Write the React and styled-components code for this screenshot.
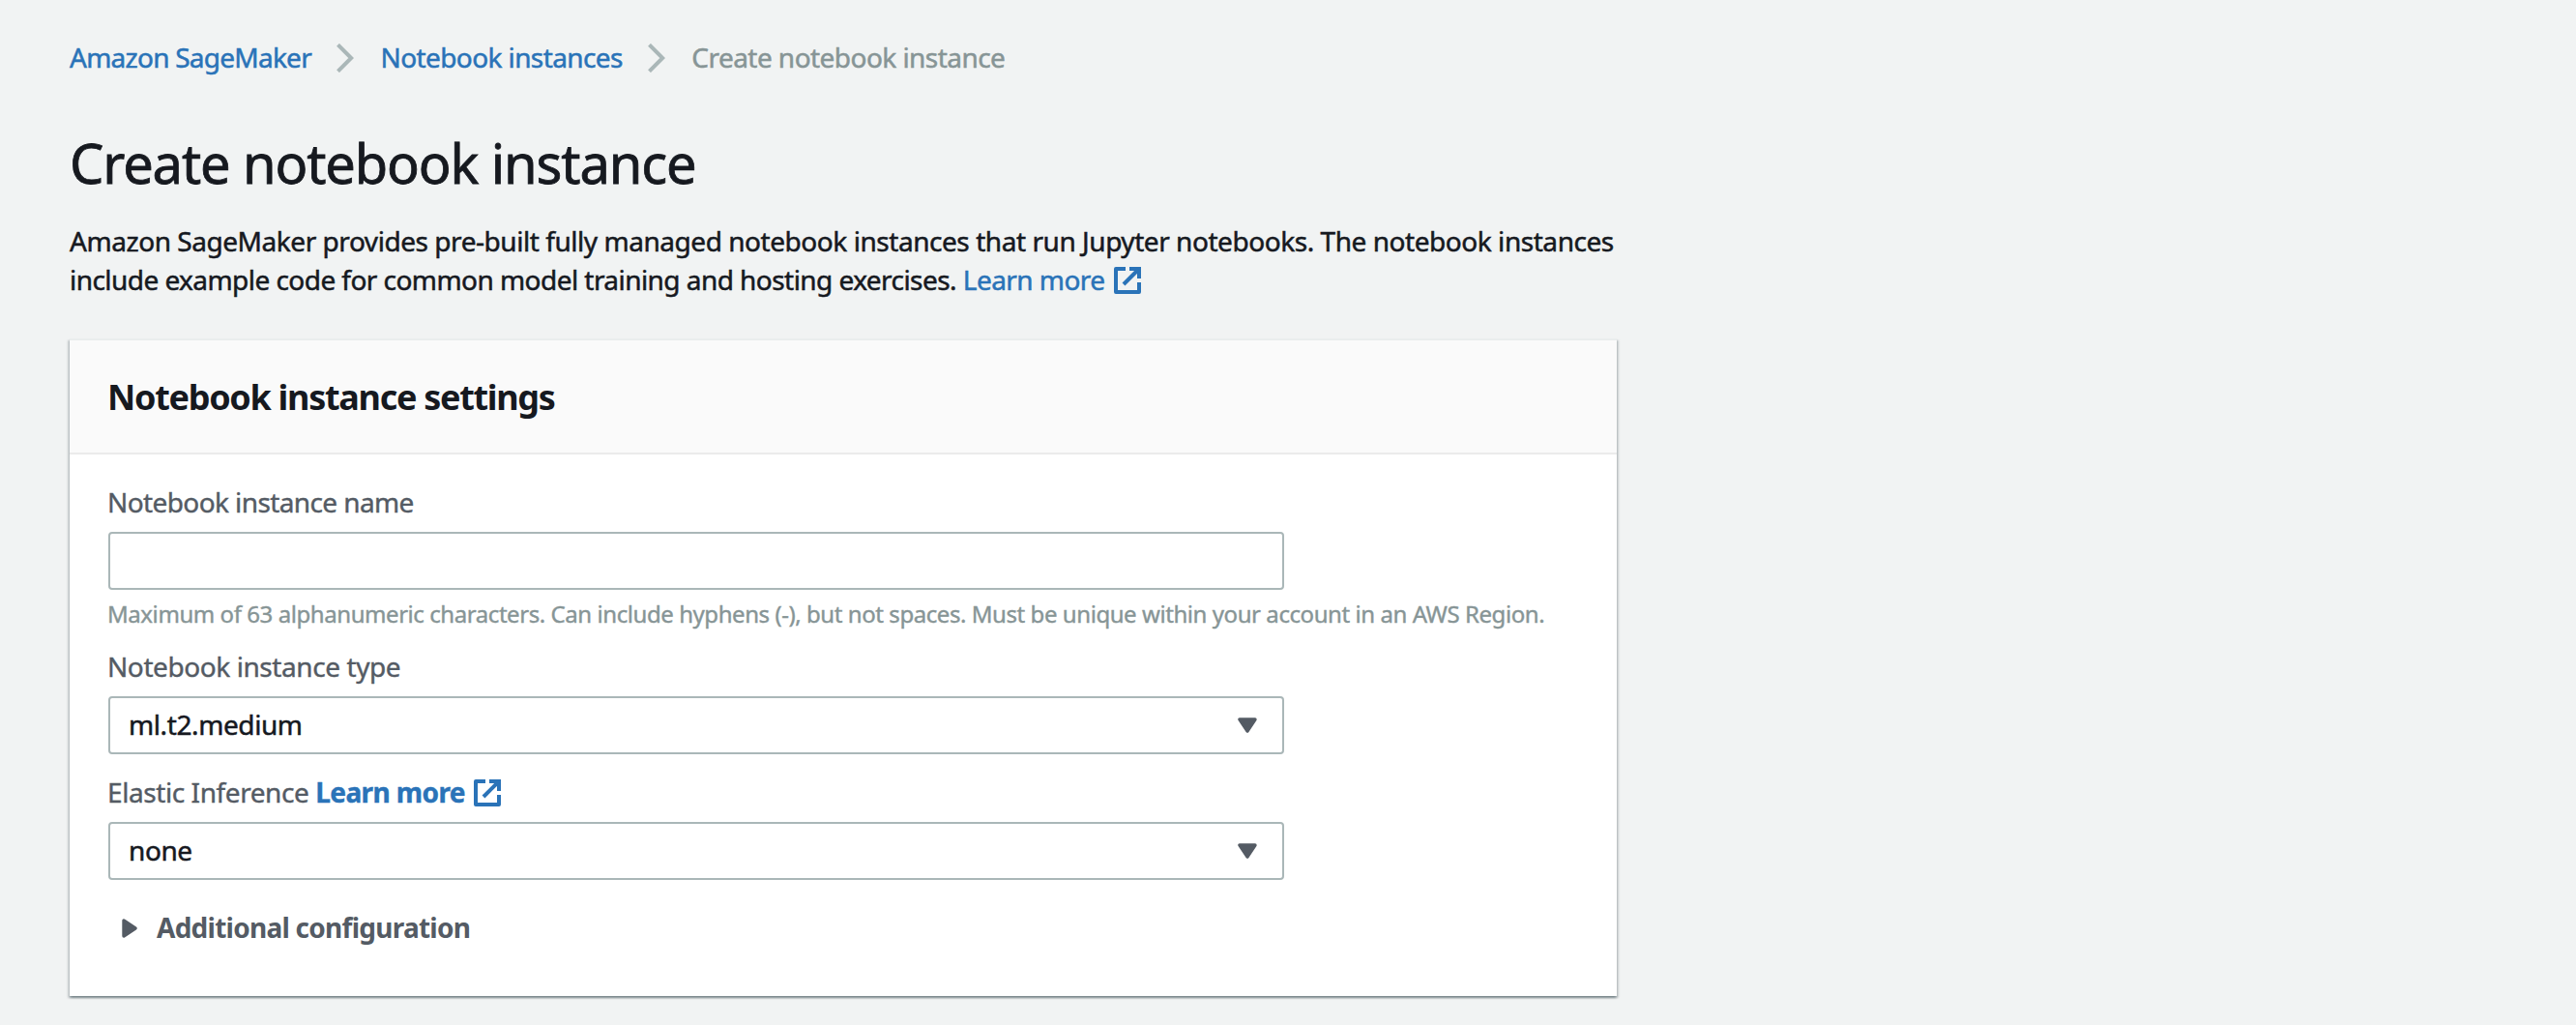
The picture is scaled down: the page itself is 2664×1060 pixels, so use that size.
import React from "react";
import styled, { createGlobalStyle } from "styled-components";

const GlobalStyle = createGlobalStyle`
  * { box-sizing: border-box; }
  body {
    margin: 0;
    background: #f1f3f3;
    color: #16191f;
    font-family: "Noto Sans", "Open Sans", sans-serif;
    font-size: 28px;
    line-height: 40px;
  }
`;

const Page = styled.main`
  width: 1672px;
  min-height: 1060px;
  padding: 39px 0 30px 72px;
`;

const Breadcrumbs = styled.nav`
  display: flex;
  align-items: center;
  gap: 26px;
  height: 40px;
  -webkit-text-stroke: 0.5px;
`;

const Link = styled.a`
  color: #2a73b8;
  font-weight: ${(p) => (p.$bold ? 700 : 400)};
  letter-spacing: ${(p) => p.$track || "-0.55px"};
  text-decoration: none;
  white-space: nowrap;
`;

const Crumb = styled(Link)`
  margin-left: ${(p) => p.$inset || 0}px;
`;

const Current = styled.span`
  margin-left: 1.5px;
  color: #879596;
  letter-spacing: -0.55px;
  white-space: nowrap;
`;

const ChevronSvg = styled.svg`
  flex: none;
  width: 18px;
  height: 30px;
  margin-top: 2px;
`;

const Title = styled.h1`
  margin: 55px 0 27px;
  font-size: 56px;
  font-weight: 400;
  line-height: 68px;
  letter-spacing: -1.12px;
  -webkit-text-stroke: 0.8px;
`;

const Intro = styled.p`
  margin: 0 0 41px;
  -webkit-text-stroke: 0.5px;
`;

const IntroLine = styled.span`
  display: block;
  white-space: nowrap;
  letter-spacing: ${(p) => p.$track};
`;

const ExternalSvg = styled.svg`
  width: 28px;
  height: 28px;
  margin-left: 9px;
  vertical-align: -4px;
`;

const Card = styled.section`
  width: 1600px;
  background: #fff;
  border-top: 2px solid #eaeded;
  box-shadow: 0 2px 2px 0 rgba(0, 28, 36, 0.3),
    2px 2px 2px 0 rgba(0, 28, 36, 0.15),
    -2px 2px 2px 0 rgba(0, 28, 36, 0.15);
`;

const CardHeader = styled.header`
  height: 118px;
  padding: 37px 39px 0;
  background: #fafafa;
  border-bottom: 2px solid #ebebeb;
`;

const CardTitle = styled.h2`
  margin: 0;
  font-size: 36px;
  font-weight: 700;
  line-height: 44px;
  letter-spacing: -1.3px;
`;

const CardBody = styled.div`
  display: flex;
  flex-direction: column;
  padding: 29px 40px 51px;
`;

const Field = styled.div`
  display: flex;
  flex-direction: column;
  margin-bottom: ${(p) => p.$after}px;
`;

const Label = styled.label`
  height: 40px;
  margin: 0 0 11px -1px;
  color: #545b64;
  letter-spacing: ${(p) => p.$track};
  white-space: nowrap;
  -webkit-text-stroke: 0.4px;
`;

const TextInput = styled.input`
  width: 1216px;
  height: 60px;
  padding: 0 19px;
  background: #fff;
  border: 2px solid #aab7b8;
  border-radius: 4px;
  font: inherit;
  outline: none;
`;

const SelectBox = styled.div`
  display: flex;
  align-items: center;
  justify-content: space-between;
  width: 1216px;
  height: 60px;
  padding: 0 26px 2px 19px;
  background: #fff;
  border: 2px solid #aab7b8;
  border-radius: 4px;
  letter-spacing: -0.4px;
  -webkit-text-stroke: 0.5px;
`;

const DownSvg = styled.svg`
  width: 20px;
  height: 16px;
  margin-top: 2px;
`;

const Hint = styled.p`
  margin: 9px 0 0 -1px;
  color: #879596;
  font-size: 24px;
  line-height: 32px;
  letter-spacing: -0.435px;
  white-space: nowrap;
  -webkit-text-stroke: 0.4px;
`;

const Expander = styled.div`
  display: flex;
  align-items: center;
  gap: 20px;
  height: 40px;
  padding-left: 14px;
  color: #545b64;
  font-weight: 700;
  letter-spacing: -0.74px;
`;

const RightSvg = styled.svg`
  width: 16px;
  height: 20px;
  margin-top: 2px;
`;

const Chevron = () => (
  <ChevronSvg viewBox="0 0 18 30" fill="none">
    <path d="M1.5 1.3 15.2 15 1.5 28.7" stroke="#aab7b8" strokeWidth="4" />
  </ChevronSvg>
);

const ExternalIcon = () => (
  <ExternalSvg viewBox="0 0 28 28" fill="none" stroke="#2a73b8" strokeWidth="4" strokeLinejoin="round">
    <path d="M12 2H2V26H26V16" />
    <path d="M16 2H26V12" strokeLinejoin="miter" />
    <path d="M10 18 25.5 2.5" />
  </ExternalSvg>
);

const Select = ({ children }) => (
  <SelectBox role="combobox">
    {children}
    <DownSvg viewBox="0 0 20 16">
      <path d="M2 2H18L10 14Z" fill="#545b64" stroke="#545b64" strokeWidth="3.4" strokeLinejoin="round" />
    </DownSvg>
  </SelectBox>
);

export default function App() {
  return (
    <>
      <GlobalStyle />
      <Page>
        <Breadcrumbs>
          <Crumb $track="-0.75px">Amazon SageMaker</Crumb>
          <Chevron />
          <Crumb $inset={1.5} $track="-0.6px">Notebook instances</Crumb>
          <Chevron />
          <Current>Create notebook instance</Current>
        </Breadcrumbs>
        <Title>Create notebook instance</Title>
        <Intro>
          <IntroLine $track="-0.45px">
            Amazon SageMaker provides pre-built fully managed notebook instances that run Jupyter notebooks. The notebook instances
          </IntroLine>
          <IntroLine $track="-0.55px">
            include example code for common model training and hosting exercises. <Link>Learn more</Link>
            <ExternalIcon />
          </IntroLine>
        </Intro>
        <Card>
          <CardHeader>
            <CardTitle>Notebook instance settings</CardTitle>
          </CardHeader>
          <CardBody>
            <Field $after={18}>
              <Label $track="-0.6px">Notebook instance name</Label>
              <TextInput />
              <Hint>
                Maximum of 63 alphanumeric characters. Can include hyphens (-), but not spaces. Must be unique within your account in an AWS Region.
              </Hint>
            </Field>
            <Field $after={19}>
              <Label $track="-0.42px">Notebook instance type</Label>
              <Select>ml.t2.medium</Select>
            </Field>
            <Field $after={29}>
              <Label $track="-0.42px">
                Elastic Inference <Link $bold $track="-0.6px">Learn more</Link>
                <ExternalIcon />
              </Label>
              <Select>none</Select>
            </Field>
            <Expander>
              <RightSvg viewBox="0 0 16 20">
                <path d="M2 2V18L14 10Z" fill="#545b64" stroke="#545b64" strokeWidth="3.4" strokeLinejoin="round" />
              </RightSvg>
              Additional configuration
            </Expander>
          </CardBody>
        </Card>
      </Page>
    </>
  );
}
